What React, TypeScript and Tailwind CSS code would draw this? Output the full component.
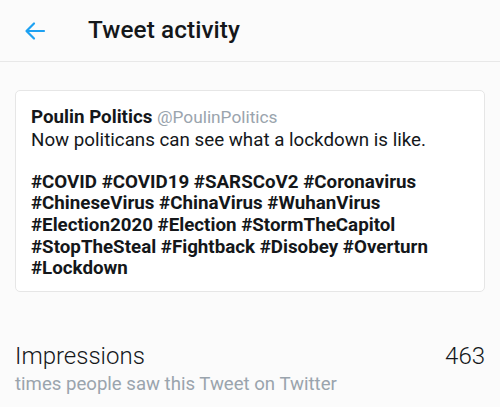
const hashtags = [
  "#COVID #COVID19 #SARSCoV2 #Coronavirus",
  "#ChineseVirus #ChinaVirus #WuhanVirus",
  "#Election2020 #Election #StormTheCapitol",
  "#StopTheSteal #Fightback #Disobey #Overturn",
  "#Lockdown",
];

const App = () => {
  return (
    <div className="w-[500px] h-[407px] bg-[#fbfbfb] overflow-hidden font-['Roboto',sans-serif] text-[#14171a]">
      <div className="h-[62px] flex items-center border-b border-[#e8e8e8]">
        <div className="w-[88px] flex items-center pl-[24px]">
          <svg width="22" height="20" viewBox="0 0 22 20" fill="none">
            <path
              d="M20 10H3M10 2.5L2.5 10L10 17.5"
              stroke="#1da1f2"
              strokeWidth="2.2"
              strokeLinecap="round"
              strokeLinejoin="round"
            />
          </svg>
        </div>
        <h1 className="text-[24.3px] font-medium tracking-[0.1px]">Tweet activity</h1>
      </div>

      <div className="mx-[15px] mt-[28px] bg-white border border-[#e6e6e6] rounded-[5px] px-[15px] pt-[16px] pb-[11px] text-[18.75px] leading-[21.6px]">
        <div>
          <span className="font-bold">Poulin Politics</span>{" "}
          <span className="text-[#9aa4ad] text-[17.3px]">@PoulinPolitics</span>
        </div>
        <p className="mt-[1px]">Now politicans can see what a lockdown is like.</p>
        <div className="h-[20.6px]" />
        {hashtags.map((line) => (
          <p key={line} className="font-bold">
            {line}
          </p>
        ))}
      </div>

      <div className="mx-[15px] mt-[50px] flex items-start justify-between">
        <div>
          <div className="text-[24px] font-light leading-[28px]">Impressions</div>
          <div className="text-[18.6px] text-[#9aa4ad] leading-[22px] mt-[3px]">
            times people saw this Tweet on Twitter
          </div>
        </div>
        <div className="text-[24px] font-light leading-[28px]">463</div>
      </div>
    </div>
  );
};

export default App;
